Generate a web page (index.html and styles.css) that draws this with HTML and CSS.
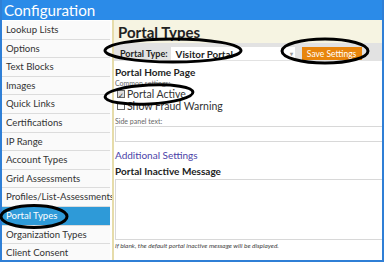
FILE: index.html
```html
<!DOCTYPE html>
<html lang="en">
  <head>
    <meta charset="UTF-8" />
    <title>Configuration</title>
    <link rel="stylesheet" href="styles.css">
  </head>
  <body>
    <div class="frame">
      <div class="titlebar">Configuration</div>

      <div class="main">
        <ul class="sidebar">
          <li>Lookup Lists</li>
          <li>Options</li>
          <li>Text Blocks</li>
          <li>Images</li>
          <li>Quick Links</li>
          <li>Certifications</li>
          <li>IP Range</li>
          <li>Account Types</li>
          <li>Grid Assessments</li>
          <li>Profiles/List-Assessments</li>
          <li class="active">Portal Types</li>
          <li>Organization Types</li>
          <li>Client Consent</li>
        </ul>

        <div class="content">
          <div class="page-head">
            <h1>Portal Types</h1>
          </div>

          <div class="toolbar">
            <label class="type-label">Portal Type:</label>
            <div class="select">
              <span>Visitor Portal</span>
              <span class="caret">&#9662;</span>
            </div>
            <button class="save-btn">Save Settings</button>
          </div>

          <div class="form">
            <h2>Portal Home Page</h2>
            <div class="small-label">Common settings:</div>
            <label class="check"><span class="box checked">&#10003;</span>Portal Active</label>
            <label class="check"><span class="box"></span>Show Fraud Warning</label>
            <div class="small-label side">Side panel text:</div>
            <div class="input"></div>

            <a class="link">Additional Settings</a>

            <h2 class="inactive">Portal Inactive Message</h2>
            <div class="textarea"></div>
            <div class="hint">If blank, the default portal inactive message will be displayed.</div>
          </div>
        </div>
      </div>
    </div>

    <!-- hand drawn annotation marks -->
    <svg class="marks" width="384" height="265" viewBox="0 0 384 265">
      <ellipse cx="173" cy="50.5" rx="68" ry="11.5" />
      <ellipse cx="325" cy="51" rx="43" ry="12" />
      <ellipse cx="149" cy="94.5" rx="44" ry="9.5" transform="rotate(-3 149 94.5)" />
      <ellipse cx="34" cy="216.5" rx="33" ry="11" />
    </svg>
  </body>
</html>
```

FILE: styles.css
```css
body {
  margin: 0;
  background-color: #fff;
  font-family: Lato, "Open Sans", sans-serif;
  color: #222;
  width: 384px;
  height: 265px;
  overflow: hidden;
  position: relative;
}

.frame {
  height: 262px;
  border: 2px solid #2f7fd6;
  border-top: 0;
  box-sizing: border-box;
  display: flex;
  flex-direction: column;
  overflow: hidden;
}

.titlebar {
  height: 20px;
  flex: none;
  background-color: #2b8be8;
  color: #fff;
  font-size: 15.2px;
  line-height: 21px;
  padding-left: 4px;
  margin: 0 -2px;
}

.main {
  flex: 1;
  display: flex;
  min-height: 0;
  padding-top: 1px;
}

.sidebar {
  list-style: none;
  margin: 0;
  padding: 0;
  width: 108px;
  flex: none;
  background-color: #fff;
}

.sidebar li {
  height: 17.6px;
  line-height: 17.6px;
  border-bottom: 1px solid #dcdcdc;
  padding-left: 4px;
  font-size: 9.6px;
  color: #333;
  white-space: nowrap;
  background-color: #fafafa;
}

.sidebar li.active {
  background-color: #2e9ad8;
  color: #fff;
}

.content {
  flex: 1;
  min-width: 0;
  margin-left: 2px;
  margin-top: -1px;
  border-left: 2px solid #e6dcaa;
  display: flex;
  flex-direction: column;
}

.page-head {
  height: 23px;
  background-color: #f6f4e2;
  padding-left: 4px;
}

.page-head h1 {
  margin: 0;
  font-size: 15px;
  line-height: 25px;
  font-weight: bold;
}

.toolbar {
  height: 18px;
  background-color: #e2e2e2;
  display: flex;
  align-items: center;
  padding-left: 6px;
}

.type-label {
  flex: none;
  font-size: 9px;
  font-weight: bold;
  margin-top: 3px;
  margin-right: 3px;
  white-space: nowrap;
}

.select {
  width: 124px;
  flex: none;
  box-sizing: border-box;
  height: 13px;
  margin-top: 3px;
  background-color: #fff;
  display: flex;
  align-items: center;
  justify-content: space-between;
  padding: 0 2px 0 5px;
  font-size: 9.8px;
  font-weight: bold;
}

.caret {
  font-size: 6px;
  color: #999;
}

.save-btn {
  margin-left: 7px;
  margin-top: 3px;
  width: 60px;
  flex: none;
  height: 13px;
  border: 0;
  padding: 0;
  background-color: #e8850c;
  color: #fff;
  font-family: inherit;
  font-size: 8.5px;
}

.form {
  padding-left: 1px;
  display: flex;
  flex-direction: column;
}

.form h2 {
  margin: 5px 0 0 0;
  font-size: 10px;
  line-height: 12px;
  font-weight: bold;
}

.small-label {
  font-size: 7px;
  color: #666;
  line-height: 9px;
  margin-top: 1px;
}

.small-label.side {
  margin-top: 5px;
}

.check {
  display: flex;
  align-items: center;
  font-size: 10.5px;
  line-height: 12px;
  color: #333;
  padding-left: 2px;
}

.box {
  width: 8px;
  height: 8px;
  border: 1px solid #666;
  margin-right: 2px;
  font-size: 7px;
  line-height: 8px;
  text-align: center;
  color: #333;
  box-sizing: border-box;
}

.box.checked {
  background-color: #ddd;
}

.input {
  height: 14px;
  border: 1px solid #d8d8d8;
  margin-top: 0;
  margin-right: -4px;
}

.link {
  font-size: 10px;
  color: #4b43a8;
  margin-top: 7px;
}

.form h2.inactive {
  margin-top: 4px;
}

.textarea {
  height: 59px;
  border: 1px solid #d8d8d8;
  margin-top: 2px;
  margin-right: -4px;
}

.hint {
  font-size: 6.5px;
  font-style: italic;
  color: #444;
  margin-top: 2px;
}

.marks {
  position: absolute;
  left: 0;
  top: 0;
  pointer-events: none;
}

.marks ellipse {
  fill: none;
  stroke: #000;
  stroke-width: 3;
}
```
